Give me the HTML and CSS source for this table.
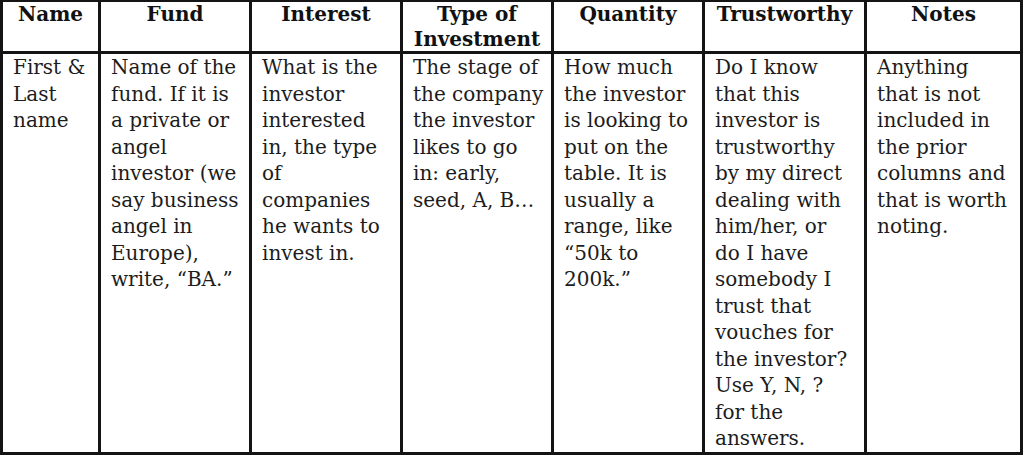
FILE: index.html
```html
<!DOCTYPE html>
<html lang="en">
<head>
<meta charset="utf-8">
<title>Investor tracking table</title>
<link rel="stylesheet" href="styles.css">
</head>
<body>
<table class="grid">
  <colgroup>
    <col class="c-name">
    <col class="c-std">
    <col class="c-std">
    <col class="c-std">
    <col class="c-std">
    <col class="c-trust">
    <col class="c-notes">
  </colgroup>
  <thead>
    <tr>
      <th>Name</th>
      <th>Fund</th>
      <th>Interest</th>
      <th>Type of<br>Investment</th>
      <th>Quantity</th>
      <th>Trustworthy</th>
      <th>Notes</th>
    </tr>
  </thead>
  <tbody>
    <tr>
      <td>First &amp;<br>Last<br>name</td>
      <td>Name of the<br>fund. If it is<br>a private or<br>angel<br>investor (we<br>say business<br>angel in<br>Europe),<br>write, “BA.”</td>
      <td>What is the<br>investor<br>interested<br>in, the type<br>of<br>companies<br>he wants to<br>invest in.</td>
      <td>The stage of<br>the company<br>the investor<br>likes to go<br>in: early,<br>seed, A, B…</td>
      <td>How much<br>the investor<br>is looking to<br>put on the<br>table. It is<br>usually a<br>range, like<br>“50k to<br>200k.”</td>
      <td>Do I know<br>that this<br>investor is<br>trustworthy<br>by my direct<br>dealing with<br>him/her, or<br>do I have<br>somebody I<br>trust that<br>vouches for<br>the investor?<br>Use Y, N, ?<br>for the<br>answers.</td>
      <td>Anything<br>that is not<br>included in<br>the prior<br>columns and<br>that is worth<br>noting.</td>
    </tr>
  </tbody>
</table>
</body>
</html>
```

FILE: styles.css
```css
html, body {
  margin: 0;
  padding: 0;
  background: #ffffff;
}

.grid {
  border-collapse: separate;
  border-spacing: 0;
  table-layout: fixed;
  width: 1023px;
  border-left: 3px solid #141414;
  border-top: 2px solid #141414;
  font-family: "DejaVu Serif", serif;
  font-size: 20px;
  color: #1c1c1c;
}

.c-name { width: 98px; }
.c-std { width: 151px; }
.c-trust { width: 162px; }
.c-notes { width: 156px; }

.grid th,
.grid td {
  border-right: 3px solid #141414;
  border-bottom: 3px solid #141414;
  vertical-align: top;
  white-space: nowrap;
  overflow: visible;
}

.grid th {
  font-weight: bold;
  text-align: center;
  line-height: 24.5px;
  padding: 0 1px;
  color: #111111;
}

.grid td {
  text-align: left;
  line-height: 26.5px;
  padding: 0 2px 0 10px;
}
```
